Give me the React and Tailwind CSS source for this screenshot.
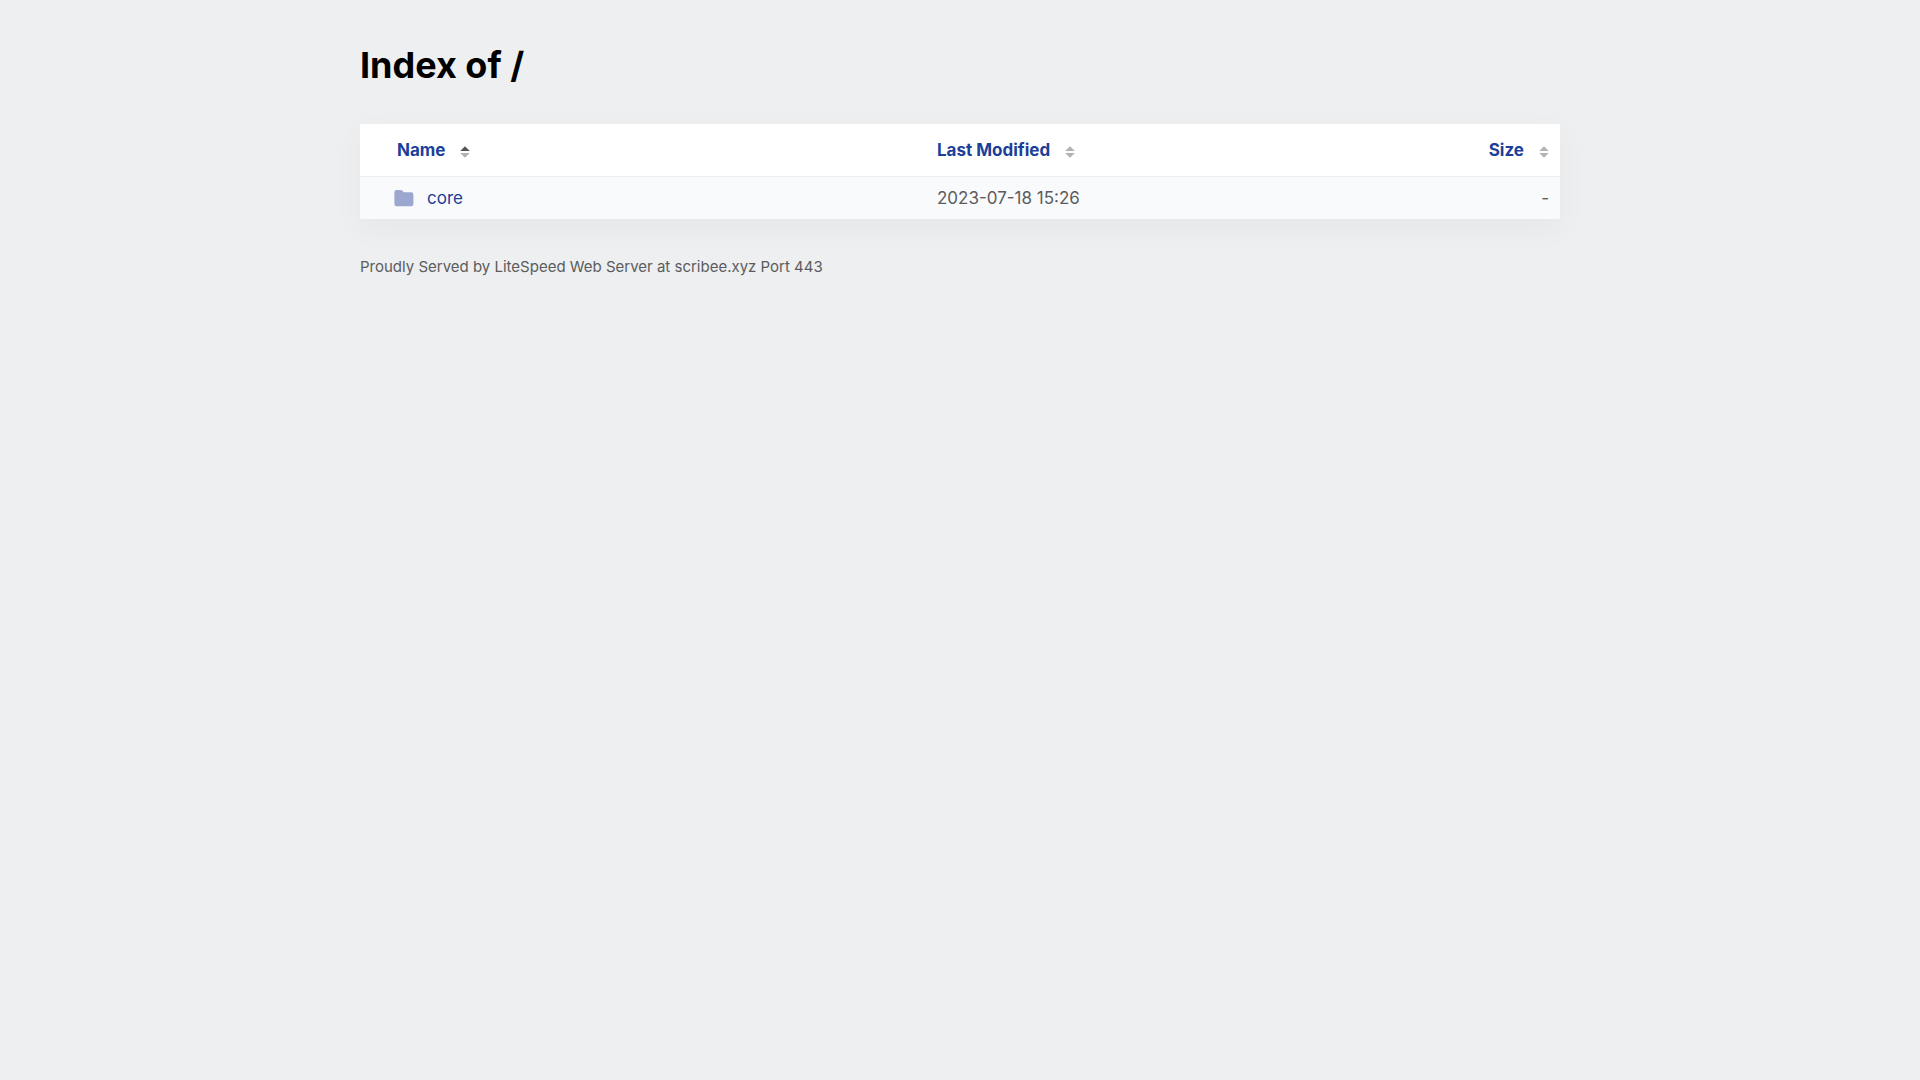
import { useState } from "react"

const FILES = [
  { name: "core", href: "/core/", modified: "2023-07-18 15:26", size: "-" },
]

function SortIcon({ direction }) {
  return (
    <svg viewBox="0 0 10 12" className="w-[10px] h-3 mt-1" aria-hidden="true">
      <path d="M5 0.2L9.8 5H0.2Z" fill={direction === "asc" ? "#555555" : "#b2b2b2"} />
      <path d="M5 11.8L0.2 7H9.8Z" fill={direction === "desc" ? "#555555" : "#b2b2b2"} />
    </svg>
  )
}

function FolderIcon() {
  return (
    <svg viewBox="0 0 20 17" className="w-5 h-[17px]" fill="#9ba7cf" aria-hidden="true">
      <path d="M2.5 0H6.8Q7.6 0 8.2 0.6L9.9 2.3H17.2A2.2 2.2 0 0 1 19.4 4.5V14A2.2 2.2 0 0 1 17.2 16.2H2.6A2.2 2.2 0 0 1 0.4 14V2.1A2.1 2.1 0 0 1 2.5 0Z" />
    </svg>
  )
}

function SortButton({ label, direction, onClick }) {
  return (
    <button
      type="button"
      onClick={onClick}
      className="inline-flex items-center gap-[15px] font-bold text-[#1c3f99] cursor-pointer"
    >
      {label}
      <SortIcon direction={direction} />
    </button>
  )
}

export default function App() {
  const [sort, setSort] = useState({ key: "name", direction: "asc" })

  const toggleSort = (key) => {
    setSort((prev) => ({
      key,
      direction: prev.key === key && prev.direction === "asc" ? "desc" : "asc",
    }))
  }

  const directionOf = (key) => (sort.key === key ? sort.direction : null)

  const rows = [...FILES].sort((a, b) => {
    const order = a[sort.key].localeCompare(b[sort.key])
    return sort.direction === "asc" ? order : -order
  })

  return (
    <div className="min-h-screen bg-[#edeff1] px-5 pt-10 font-['Inter',sans-serif] text-[#5c5c5c]">
      <main className="max-w-[1200px] mx-auto">
        <h1 className="text-4xl leading-[50px] font-bold text-black">Index of /</h1>

        <table className="w-full mt-[34px] table-fixed border-collapse bg-white text-[17px] leading-6 shadow-[0_10px_30px_rgba(0,20,20,0.04)]">
          <thead>
            <tr className="h-[52px] border-b border-[#eceef1]">
              <th className="w-[47%] pl-[37px] pr-[11px] text-left">
                <SortButton label="Name" direction={directionOf("name")} onClick={() => toggleSort("name")} />
              </th>
              <th className="pl-[13px] pr-[11px] text-left">
                <SortButton label="Last Modified" direction={directionOf("modified")} onClick={() => toggleSort("modified")} />
              </th>
              <th className="w-1/5 pl-[13px] pr-[11px] text-right">
                <SortButton label="Size" direction={directionOf("size")} onClick={() => toggleSort("size")} />
              </th>
            </tr>
          </thead>
          <tbody>
            {rows.map((file) => (
              <tr key={file.name} className="h-[43px] bg-[#f9fafc]">
                <td className="pl-[34px] pr-[11px]">
                  <a href={file.href} className="inline-flex items-center gap-[13px] align-middle text-[#1c3f99]">
                    <FolderIcon />
                    {file.name}
                  </a>
                </td>
                <td className="pl-[13px] pr-[11px]">{file.modified}</td>
                <td className="pl-[13px] pr-[11px] text-right">{file.size}</td>
              </tr>
            ))}
          </tbody>
        </table>

        <footer className="mt-9 text-[15px] leading-6">
          Proudly Served by LiteSpeed Web Server at scribee.xyz Port 443
        </footer>
      </main>
    </div>
  )
}
